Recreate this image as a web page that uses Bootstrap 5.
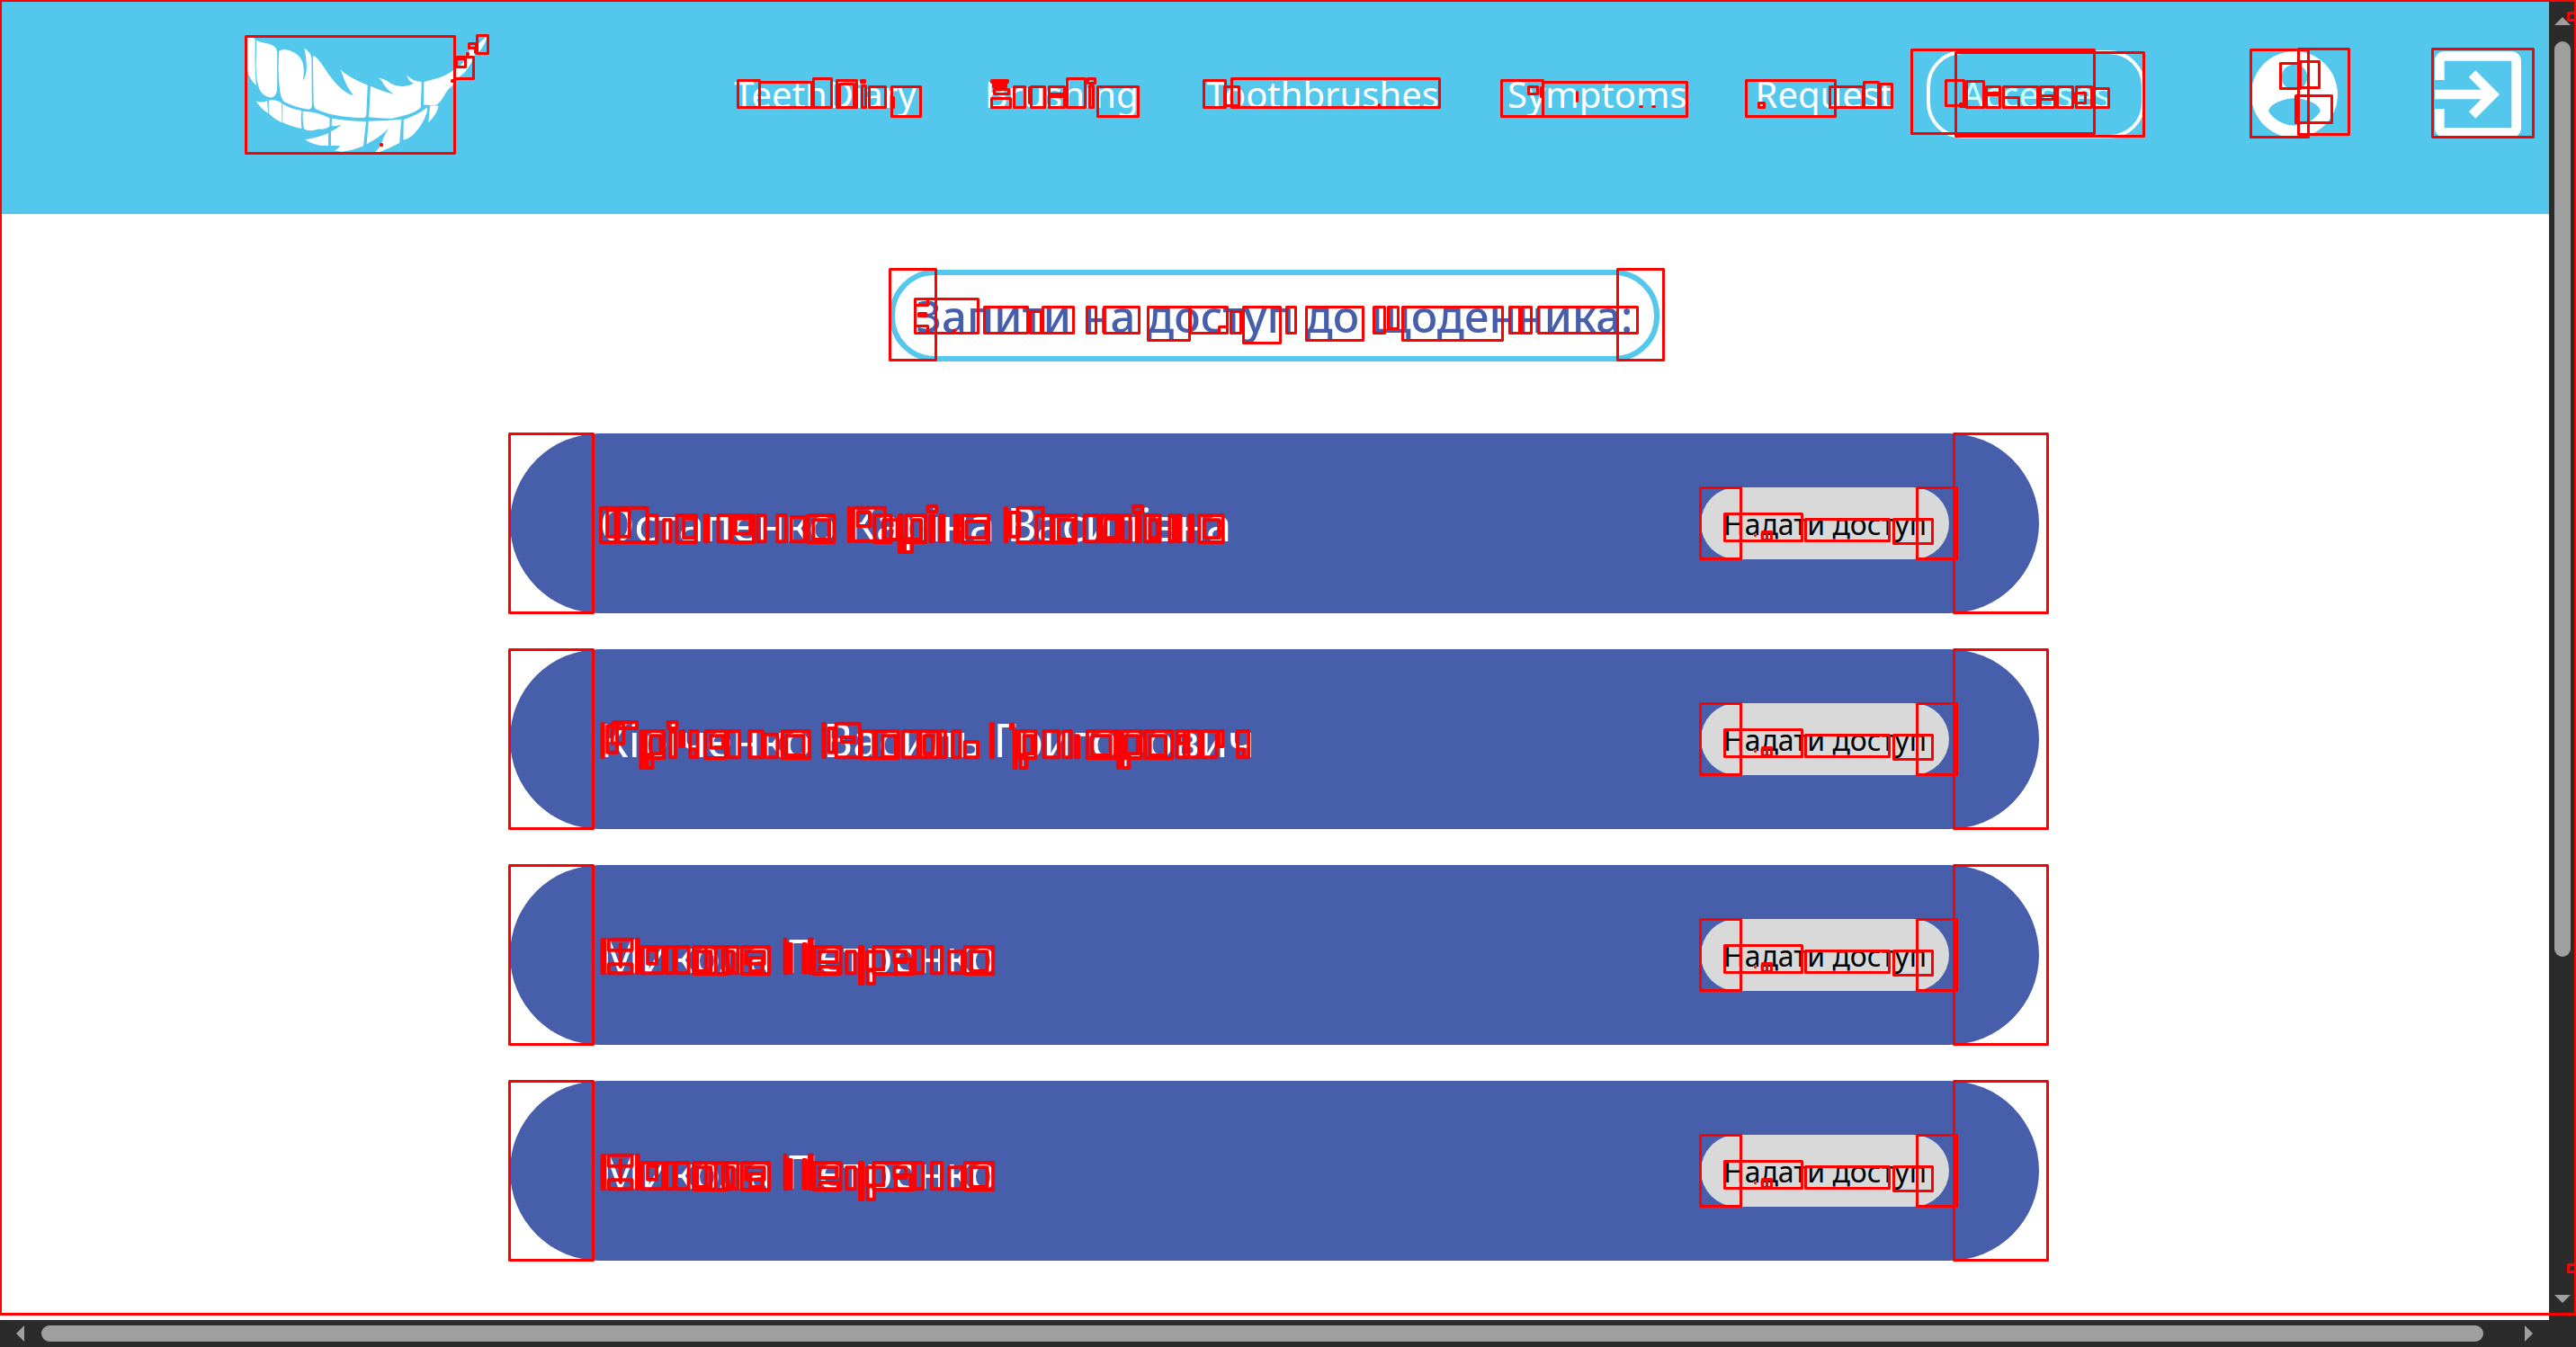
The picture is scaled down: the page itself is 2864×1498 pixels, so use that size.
<!DOCTYPE html>
<html lang="uk">
<head>
<meta charset="utf-8">
<meta name="viewport" content="width=device-width, initial-scale=1">
<title>TeethDiary</title>
<link href="https://cdn.jsdelivr.net/npm/bootstrap@5.3.0/dist/css/bootstrap.min.css" rel="stylesheet">
<style>
  body { font-family: "Noto Sans", "Open Sans", sans-serif; background: #fff; }
  .shell { display: grid; grid-template: minmax(0, 1fr) 30px / minmax(0, 1fr) 30px; height: 100vh; position: relative; overflow: hidden; }
  .topbar { background: #53c8ec; height: 238px; padding: 0 31px 28px 272px; }
  .brand svg { width: 272px; height: 136px; display: block; }
  .topnav .nav-link { color: #fff; font-size: 40px; line-height: 56px; padding: 17px 34px; border: 4px solid transparent; border-radius: 40px; }
  .topnav .nav-link.active { border-color: #fff; color: #cff; }
  .user-link { margin-left: 118px; }
  .exit-link { margin-left: 108px; }
  .round-icon { width: 96px; height: 96px; display: block; fill: #fff; }
  .page-title { color: #475eab; font-size: 49px; font-weight: 500; line-height: 70px; padding: 10px 24px; border: 6px solid #53c8ec; border-radius: 50px; margin: 62px 0 80px; }
  .requests { width: 60%; gap: 40px; }
  .request { background: #475eab; color: #fff; border-radius: 100px; height: 200px; padding: 0 100px; }
  .request-name { font-size: 51px; line-height: 72px; }
  .btn-grant { background: #d9d9d9; color: #000; font-size: 32px; line-height: 44px; border: 0; border-radius: 40px; padding: 19px 25px 17px; }
  .track { background: #2b2b2b; }
  .track svg { fill: #9f9f9f; display: block; flex: none; }
  .thumb { background: #9f9f9f; border-radius: 9px; }
  .track-y { padding: 19px 0; }
  .rail-y { padding-top: 18px; }
  .track-y .thumb { width: 18px; height: 73%; }
  .track-x { padding: 0 18px; }
  .rail-x { padding: 0 19px; }
  .track-x .thumb { height: 18px; width: 99%; }
  .regions { position: absolute; left: 0; top: 0; width: 2864px; height: 1498px; pointer-events: none; fill: none; stroke: red; stroke-width: 3; stroke-linejoin: round; stroke-linecap: round; }
  .regions path { vector-effect: non-scaling-stroke; }
  .regions .dense { stroke-width: 4; }
</style>
</head>
<body>
<div class="shell">
  <div class="overflow-hidden">
    <header class="topbar d-flex align-items-center">
      <a class="brand" href="#" aria-label="TeethDiary">
        <svg viewBox="90 115 760 405" preserveAspectRatio="none" fill="#fff">
          <path d="M98 126L108 125Q118 128 123 136L122 200Q122 245 126 288Q104 268 98 235Z"/>
          <path d="M127 137Q134 144 165 150Q189 157 191 175L191 300Q188 328 172 328Q150 325 140 308Q126 285 125 220Z"/>
          <path d="M197 174Q210 163 232 173Q262 184 271 214Q277 238 271 272Q285 250 282 215Q281 188 275 165Q297 178 298 200L299 355Q298 369 285 367Q240 358 215 343Q202 335 199 300Q192 240 197 174Z"/>
          <path d="M302 190Q312 188 335 225Q385 310 428 321Q405 290 396 258Q390 240 386 234Q410 260 472 287L468 385Q466 396 455 395Q360 392 310 365Q304 358 304 340Z"/>
          <path d="M481 290Q530 312 554 317Q530 300 520 280Q512 265 501 262Q525 266 543 281Q580 302 615 281Q596 272 594 253Q608 274 640 276L637 360Q628 378 550 397Q510 398 476 393Z"/>
          <path d="M647 276Q664 272 686 265Q715 256 739 237Q768 218 785 190Q787 168 793 163L805 165Q815 150 846 121Q840 145 823 170L805 184Q801 205 775 243Q760 257 742 272L735 289Q720 300 708 325Q695 350 680 354L646 352Z"/>
          <path d="M126 340Q145 347 160 338L163 380Q140 365 126 340Z"/>
          <path d="M165 337Q190 333 205 347L206 411Q180 398 165 380Z"/>
          <path d="M208 349Q230 365 267 371Q263 400 267 431Q235 425 208 410Z"/>
          <path d="M271 373Q320 375 354 396L354 424Q340 435 320 432Q290 442 275 432Q269 410 271 373Z"/>
          <path d="M361 397Q410 406 467 407L459 488Q420 505 390 507L368 503Q380 500 386 487L358 487L358 440Q378 430 391 417Q375 424 360 422Z"/>
          <path d="M277 467Q320 460 350 446L350 487Q310 490 277 467Z"/>
          <path d="M475 406Q530 405 577 400L571 478Q540 495 510 508L496 508Q510 495 515 480Q520 460 537 430Q510 460 469 482Z"/>
          <path d="M584 401Q625 388 657 361Q660 380 640 415Q610 465 583 468Z"/>
          <path d="M666 355L692 355Q690 380 661 411Z"/>
        </svg>
      </a>
      <nav class="nav topnav ms-auto flex-nowrap">
        <a class="nav-link" href="#">TeethDiary</a>
        <a class="nav-link" href="#">Brushing</a>
        <a class="nav-link" href="#">Toothbrushes</a>
        <a class="nav-link" href="#">Symptoms</a>
        <a class="nav-link" href="#">Request</a>
        <a class="nav-link active" href="#" aria-current="page">Accesses</a>
      </nav>
      <a class="user-link" href="#" aria-label="Profile">
        <svg class="round-icon" viewBox="2 2 20 20"><path d="M12 2C6.48 2 2 6.48 2 12s4.48 10 10 10 10-4.48 10-10S17.52 2 12 2zm0 3c1.66 0 3 1.34 3 3s-1.34 3-3 3-3-1.34-3-3 1.34-3 3-3zm0 14.2c-2.5 0-4.71-1.28-6-3.22.03-1.99 4-3.08 6-3.08 1.99 0 5.97 1.09 6 3.08-1.29 1.94-3.5 3.22-6 3.22z"/></svg>
      </a>
      <a class="exit-link" href="#" aria-label="Exit">
        <svg class="round-icon" viewBox="3 3 18 18"><path d="M10.09 15.59L11.5 17l5-5-5-5-1.41 1.41L12.67 11H3v2h9.67l-2.58 2.59zM19 3H5c-1.11 0-2 .9-2 2v4h2V5h14v14H5v-4H3v4c0 1.1.89 2 2 2h14c1.1 0 2-.9 2-2V5c0-1.1-.9-2-2-2z"/></svg>
      </a>
    </header>
    <main class="d-flex flex-column align-items-center">
      <h1 class="page-title">Запити на доступ до щоденника:</h1>
      <div class="requests d-flex flex-column">
        <div class="request d-flex align-items-center justify-content-between"><span class="request-name">Остапенко Каріна Василівна</span><button type="button" class="btn btn-grant">Надати доступ</button></div>
        <div class="request d-flex align-items-center justify-content-between"><span class="request-name">Кіріченко Василь Григорович</span><button type="button" class="btn btn-grant">Надати доступ</button></div>
        <div class="request d-flex align-items-center justify-content-between"><span class="request-name">Микола Петренко</span><button type="button" class="btn btn-grant">Надати доступ</button></div>
        <div class="request d-flex align-items-center justify-content-between"><span class="request-name">Микола Петренко</span><button type="button" class="btn btn-grant">Надати доступ</button></div>
      </div>
    </main>
  </div>
  <div class="track track-y d-flex flex-column align-items-center">
    <svg width="18" height="9"><path d="M9 0L18 9H0Z"/></svg>
    <div class="rail-y flex-fill w-100 d-flex flex-column align-items-center"><div class="thumb"></div></div>
    <svg width="18" height="9"><path d="M0 0H18L9 9Z"/></svg>
  </div>
  <div class="track track-x d-flex align-items-center">
    <svg width="9" height="18"><path d="M9 0V18L0 9Z"/></svg>
    <div class="rail-x flex-fill"><div class="thumb"></div></div>
    <svg width="9" height="18"><path d="M0 0V18L9 9Z"/></svg>
  </div>
  <div class="track"></div>
  <svg class="regions" viewBox="0 0 2864 1498" aria-hidden="true"></svg>
</div>
<script src="https://cdn.jsdelivr.net/npm/bootstrap@5.3.0/dist/js/bootstrap.bundle.min.js"></script>
<script>
  // Outlined regions, each "left top right bottom", grouped by the area they mark.
  const page = '1 1 2864 1462,274 41 506 171,506 64 527 88,508 66 518 75,522 49 530 54,531 40 543 60,529 56 530 59,520 60 521 61,503 90 504 91,424 161 425 162,' +
    '821 90 845 120,845 92 903 120,905 88 925 120,931 90 953 120,934 94 950 120,958 90 962 92,959 96 963 120,967 97 985 120,992 97 1024 130,993 109 994 120,' +
    '1103 90 1121 92,1105 94 1119 97,1106 100 1122 105,1103 110 1124 120,1128 97 1140 120,1147 97 1162 120,1145 98 1147 115,1167 97 1184 120,1168 105 1183 108,1187 88 1207 120,1210 88 1218 93,1212 96 1216 120,1221 97 1266 130,' +
    '1339 90 1363 120,1362 97 1378 118,1370 88 1601 120,1534 117 1534 118,1670 90 1716 130,1716 92 1876 130,1700 97 1710 105,1714 98 1715 108,1754 103 1754 113,1824 119 1826 119,1838 119 1840 119,' +
    '1942 90 2041 130,1956 115 1962 120,2035 97 2072 120,2073 92 2089 120,2091 94 2104 120,' +
    '2126 56 2329 149,2175 59 2384 152,2164 90 2184 118,2187 91 2206 120,2180 116 2185 119,2209 97 2224 120,2209 104 2224 106,2228 97 2266 120,2228 109 2245 120,2269 97 2285 120,2269 107 2283 111,2288 97 2305 120,2309 97 2326 120,2308 104 2319 115,2329 99 2345 120,' +
    '2503 56 2567 153,2556 55 2612 150,2536 71 2558 99,2558 69 2579 98,2553 107 2593 137,2705 55 2817 153,' +
    '990 300 1041 401,1799 300 1850 401,1018 333 1088 371,1018 333 1032 340,1022 349 1030 352,1018 363 1032 371,1061 368 1062 369,1095 342 1143 371,1146 347 1158 371,1160 342 1194 371,1209 342 1219 371,1228 342 1267 371,1277 342 1323 379,1324 342 1365 371,1356 364 1365 371,1369 347 1380 371,1383 342 1424 382,1431 342 1441 371,1453 342 1516 379,1528 342 1540 371,1544 342 1555 366,1560 342 1671 379,1679 342 1690 371,1692 342 1703 371,1711 342 1821 371,' +
    '2856 15 2866 23,2856 1407 2866 1415';
  const row = '567 0 660 199,2173 0 2277 199,1891 60 1936 139,2132 60 2176 139,1918 89 2004 119,2008 95 2101 119,2106 95 2149 122,1960 109 1970 118,1965 109 1965 118,1952 113 1952 113';
  const ostapenko = '217 284 247 399,253 284 311 399,230 292 275 380,312 309 331 399,345 325 358 397,371 309 410 399,385 320 408 385,428 309 435 397,455 309 480 397,482 309 527 399,490 320 520 370,535 309 550 397,575 309 592 397,603 315 630 397,637 309 690 399,648 325 680 390,720 284 722 397,729 284 793 395,738 300 762 345,772 309 805 399,790 325 818 390,822 309 827 432,836 309 875 399,848 325 866 390,833 388 848 432,880 278 897 297,885 311 892 397,905 309 912 397,935 309 942 397,950 309 1003 399,958 330 998 385,1037 284 1040 397,1047 300 1065 380,1062 284 1113 399,1100 309 1130 399,1135 309 1180 399,1145 325 1175 390,1198 309 1225 397,1232 309 1268 397,1240 320 1262 385,1275 309 1290 397,1297 278 1315 300,1303 311 1310 397,1320 309 1350 397,1330 325 1345 385,1370 309 1378 397,1385 309 1392 397,1410 309 1417 397,1430 309 1478 399,1440 325 1470 385';
  const kirichenko = '220 284 222 397,243 279 290 300,240 284 263 350,230 292 250 380,298 309 303 432,308 309 345 399,310 388 322 432,318 325 338 385,353 279 371 300,358 311 368 397,378 309 385 360,398 309 413 397,398 370 410 395,429 309 470 399,440 325 465 365,475 309 498 397,518 309 545 397,550 320 575 397,585 309 640 399,593 325 628 390,668 284 670 397,679 300 690 380,694 284 742 397,705 330 730 345,745 309 770 399,775 309 820 399,788 325 815 395,830 309 860 397,865 309 900 397,873 325 890 385,905 309 915 397,930 309 945 397,955 345 981 397,1008 284 1012 397,1048 288 1053 300,1055 309 1058 432,1065 309 1098 399,1068 388 1080 432,1075 325 1092 385,1115 309 1145 397,1155 309 1170 397,1180 325 1185 397,1203 309 1260 399,1213 325 1250 390,1265 309 1268 432,1275 309 1312 399,1275 388 1288 432,1282 325 1305 385,1320 309 1375 399,1330 325 1362 390,1385 309 1408 397,1390 325 1405 350,1400 309 1430 397,1437 309 1465 397,1470 309 1478 360,1508 309 1530 397,1508 370 1520 395';
  const petrenko = '220 284 225 397,233 284 280 320,233 367 280 397,257 300 257 375,290 284 293 397,300 309 343 397,312 320 330 365,350 309 365 397,370 309 395 397,405 309 450 399,412 325 440 390,430 309 473 399,465 309 495 397,475 325 485 385,503 309 558 399,512 325 548 365,520 345 545 390,590 284 592 397,598 300 603 395,628 300 632 395,640 284 645 397,650 309 703 399,660 325 695 360,660 375 698 397,715 325 732 397,742 309 748 432,757 325 790 385,758 388 771 432,770 309 850 399,812 325 835 360,815 350 845 397,853 309 870 397,888 309 908 397,923 325 950 397,955 309 1012 399,968 325 1000 390';
  const svg = document.querySelector('.regions');
  function outline(list, transform, cls) {
    const p = document.createElementNS('http://www.w3.org/2000/svg', 'path');
    p.setAttribute('d', list.split(',').map(r => { const [l, t, x, b] = r.split(' '); return `M${l} ${t}H${x}V${b}H${l}Z`; }).join(''));
    p.setAttribute('transform', transform);
    if (cls) p.setAttribute('class', cls);
    svg.appendChild(p);
  }
  outline(page, 'translate(-.5 -.5)');
  [ostapenko, kirichenko, petrenko, petrenko].forEach((name, i) => {
    outline(row, `translate(-.5 ${482.5 + i * 240})`);
    outline(name, `translate(549 ${470 + i * 240}) scale(.5485 .3333)`, 'dense');
  });
</script>
</body>
</html>
